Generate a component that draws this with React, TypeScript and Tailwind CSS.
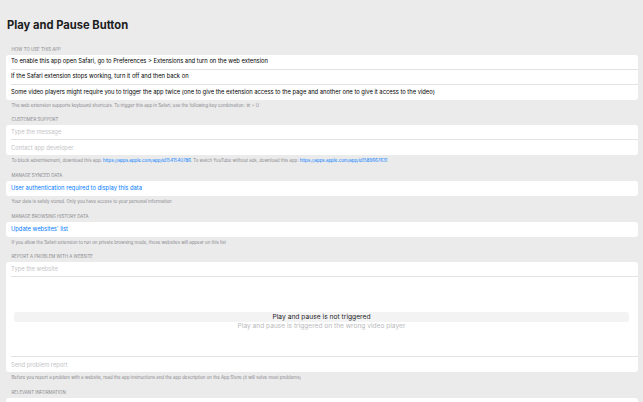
import React from "react";

const font = { fontFamily: "Inter, 'Noto Sans', sans-serif" };

function Header({ children, first }: { children: React.ReactNode; first?: boolean }) {
  return (
    <div
      className={`px-[6px] text-[4.4px] uppercase leading-[11px] text-[#8a8a8e] ${first ? "" : "mt-[2.7px]"}`}
    >
      {children}
    </div>
  );
}

function Footer({ children }: { children: React.ReactNode }) {
  return <div className="px-[6px] text-[4.4px] leading-[12px] text-[#8a8a8e]">{children}</div>;
}

function Card({ children }: { children: React.ReactNode }) {
  return <div className="overflow-hidden rounded-[3px] bg-white">{children}</div>;
}

function Row({ children, className = "", last }: { children?: React.ReactNode; className?: string; last?: boolean }) {
  return (
    <div className="pl-[5.5px]">
      <div
        className={`flex h-[15px] items-center pr-[5.5px] text-[5.8px] ${last ? "" : "border-b-[0.5px] border-[#e3e3e5]"} ${className}`}
      >
        {children}
      </div>
    </div>
  );
}

export default function App() {
  return (
    <div className="h-[402px] overflow-hidden bg-[#ebebeb] px-[5.5px]" style={font}>
      <h1 className="px-[1.5px] pt-[18px] pb-[11.7px] text-[11.2px] font-bold leading-[14px] text-[#1c1c1e]">
        Play and Pause Button
      </h1>

      <Header first>How to use this app</Header>
      <Card>
        <Row className="text-black">
          To enable this app open Safari, go to Preferences &gt; Extensions and turn on the web extension
        </Row>
        <Row className="text-black">If the Safari extension stops working, turn it off and then back on</Row>
        <Row className="text-black" last>
          Some video players might require you to trigger the app twice (one to give the extension access to the page and
          another one to give it access to the video)
        </Row>
      </Card>
      <Footer>
        The web extension supports keyboard shortcuts. To trigger this app in Safari, use the following key combination: ⌘ + U
      </Footer>

      <Header>Customer support</Header>
      <Card>
        <Row className="text-[#c4c4c7]">Type the message</Row>
        <Row className="text-[#c4c4c7]" last>
          Contact app developer
        </Row>
      </Card>
      <Footer>
        To block advertisement, download this app:{" "}
        <span className="text-[#007aff]">https://apps.apple.com/app/id1541540786</span>. To watch YouTube without ads,
        download this app: <span className="text-[#007aff]">https://apps.apple.com/app/id1589667631</span>
      </Footer>

      <Header>Manage synced data</Header>
      <Card>
        <Row className="text-[#007aff]" last>
          User authentication required to display this data
        </Row>
      </Card>
      <Footer>Your data is safely stored. Only you have access to your personal information</Footer>

      <Header>Manage browsing history data</Header>
      <Card>
        <Row className="text-[#007aff]" last>
          Update websites' list
        </Row>
      </Card>
      <Footer>If you allow the Safari extension to run on private browsing mode, those websites will appear on this list</Footer>

      <Header>Report a problem with a website</Header>
      <Card>
        <Row className="text-[#c4c4c7]">Type the website</Row>
        <div className="pl-[5.5px]">
          <div className="flex h-[80px] flex-col justify-center border-b-[0.5px] border-[#e3e3e5] pt-[10px]">
            <div className="ml-[3px] mr-[8.5px] flex h-[10.4px] items-center justify-center rounded-[2.5px] bg-[#f3f3f4] text-[6.7px] text-[#1c1c1e]">
              Play and pause is not triggered
            </div>
            <div className="flex h-[10px] items-center justify-center pr-[5.5px] text-[6.6px] text-[#b9b9bc]">
              Play and pause is triggered on the wrong video player
            </div>
          </div>
        </div>
        <Row className="text-[#c4c4c7]" last>
          Send problem report
        </Row>
      </Card>
      <Footer>
        Before you report a problem with a website, read the app instructions and the app description on the App Store (it
        will solve most problems)
      </Footer>

      <Header>Relevant information</Header>
      <Card>
        <Row last />
      </Card>
    </div>
  );
}
